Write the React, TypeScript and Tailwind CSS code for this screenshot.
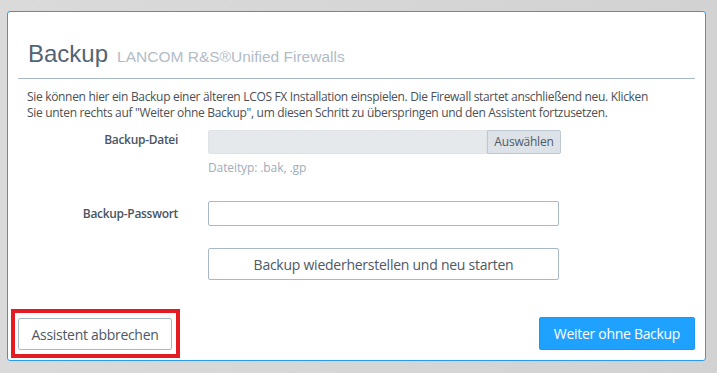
import React from "react";

export default function App() {
  const body = { fontFamily: '"Open Sans", "Noto Sans", sans-serif' };
  return (
    <div className="w-[717px] h-[373px] bg-gradient-to-r from-[#dadada] to-[#d2d2d2] pl-[7px] pt-[11px] overflow-hidden">
      <div
        className="relative w-[699px] h-[350px] bg-white border border-[#2a9bf2] rounded-[3px] px-[10px] flex flex-col"
        style={body}
      >
        <div className="pt-[28px] pb-[10px] border-b border-[#a6b7c7] flex items-baseline pl-[10px]">
          <span className="text-[24px] leading-[28px] text-[#536474]" style={{ fontFamily: '"Liberation Sans", Arial, sans-serif' }}>
            Backup
          </span>
          <span className="ml-[9px] text-[15.5px] text-[#b2bcc6]" style={{ fontFamily: '"Liberation Sans", Arial, sans-serif' }}>
            LANCOM R&amp;S®Unified Firewalls
          </span>
        </div>
        <p className="mt-[10px] pl-[9px] text-[12px] leading-[16px] text-[#4b4f54] tracking-[-0.32px]">
          Sie können hier ein Backup einer älteren LCOS FX Installation einspielen. Die Firewall startet anschließend neu. Klicken
          <br />
          Sie unten rechts auf "Weiter ohne Backup", um diesen Schritt zu überspringen und den Assistent fortzusetzen.
        </p>

        <div className="mt-[9px] flex">
          <div className="w-[160px] pr-0 text-right text-[12px] font-semibold text-[#4a5561] pt-[1px] tracking-[-0.3px]">Backup-Datei</div>
          <div className="ml-[30px] flex flex-col">
            <div className="flex h-[24px]">
              <div className="w-[279px] h-full bg-[#e6e9ec] border border-[#dfe3e7] rounded-l-[2px]" />
              <div className="w-[74px] h-full bg-[#dce2e7] border border-[#bcc8d2] rounded-r-[2px] flex items-center justify-center text-[12px] text-[#4f5b66] tracking-[-0.2px]">
                Auswählen
              </div>
            </div>
            <div className="mt-[6px] text-[12px] leading-[15px] text-[#9dadbc] tracking-[-0.1px]">Dateityp: .bak, .gp</div>
          </div>
        </div>

        <div className="mt-[26px] flex items-center">
          <div className="w-[160px] text-right text-[12px] font-semibold text-[#4a5561] tracking-[-0.3px]">Backup-Passwort</div>
          <div className="ml-[30px] w-[351px] h-[25px] border border-[#a9b8c6] rounded-[2px] bg-white" />
        </div>

        <div className="mt-[22px] flex">
          <div className="w-[160px]" />
          <div className="ml-[30px] w-[351px] h-[32px] border border-[#a9b8c6] rounded-[2px] bg-white flex items-center justify-center text-[14px] text-[#4e5863] tracking-[-0.25px]">
            Backup wiederherstellen und neu starten
          </div>
        </div>

        <div className="mt-auto mb-[10px] flex justify-between items-end">
          <div className="w-[154px] h-[32px] border border-[#a9b8c6] rounded-[2px] bg-white flex items-center justify-center text-[14px] text-[#4e5863] tracking-[-0.3px]">
            Assistent abbrechen
          </div>
          <div className="w-[156px] h-[33px] bg-[#1fa2ff] border border-[#1b98f0] rounded-[2px] flex items-center justify-center text-[14px] text-white font-medium tracking-[-0.3px]">
            Weiter ohne Backup
          </div>
        </div>

        <div className="absolute left-[3px] top-[297px] w-[169px] h-[49px] border-[4px] border-[#e51b24] pointer-events-none" />
      </div>
    </div>
  );
}
